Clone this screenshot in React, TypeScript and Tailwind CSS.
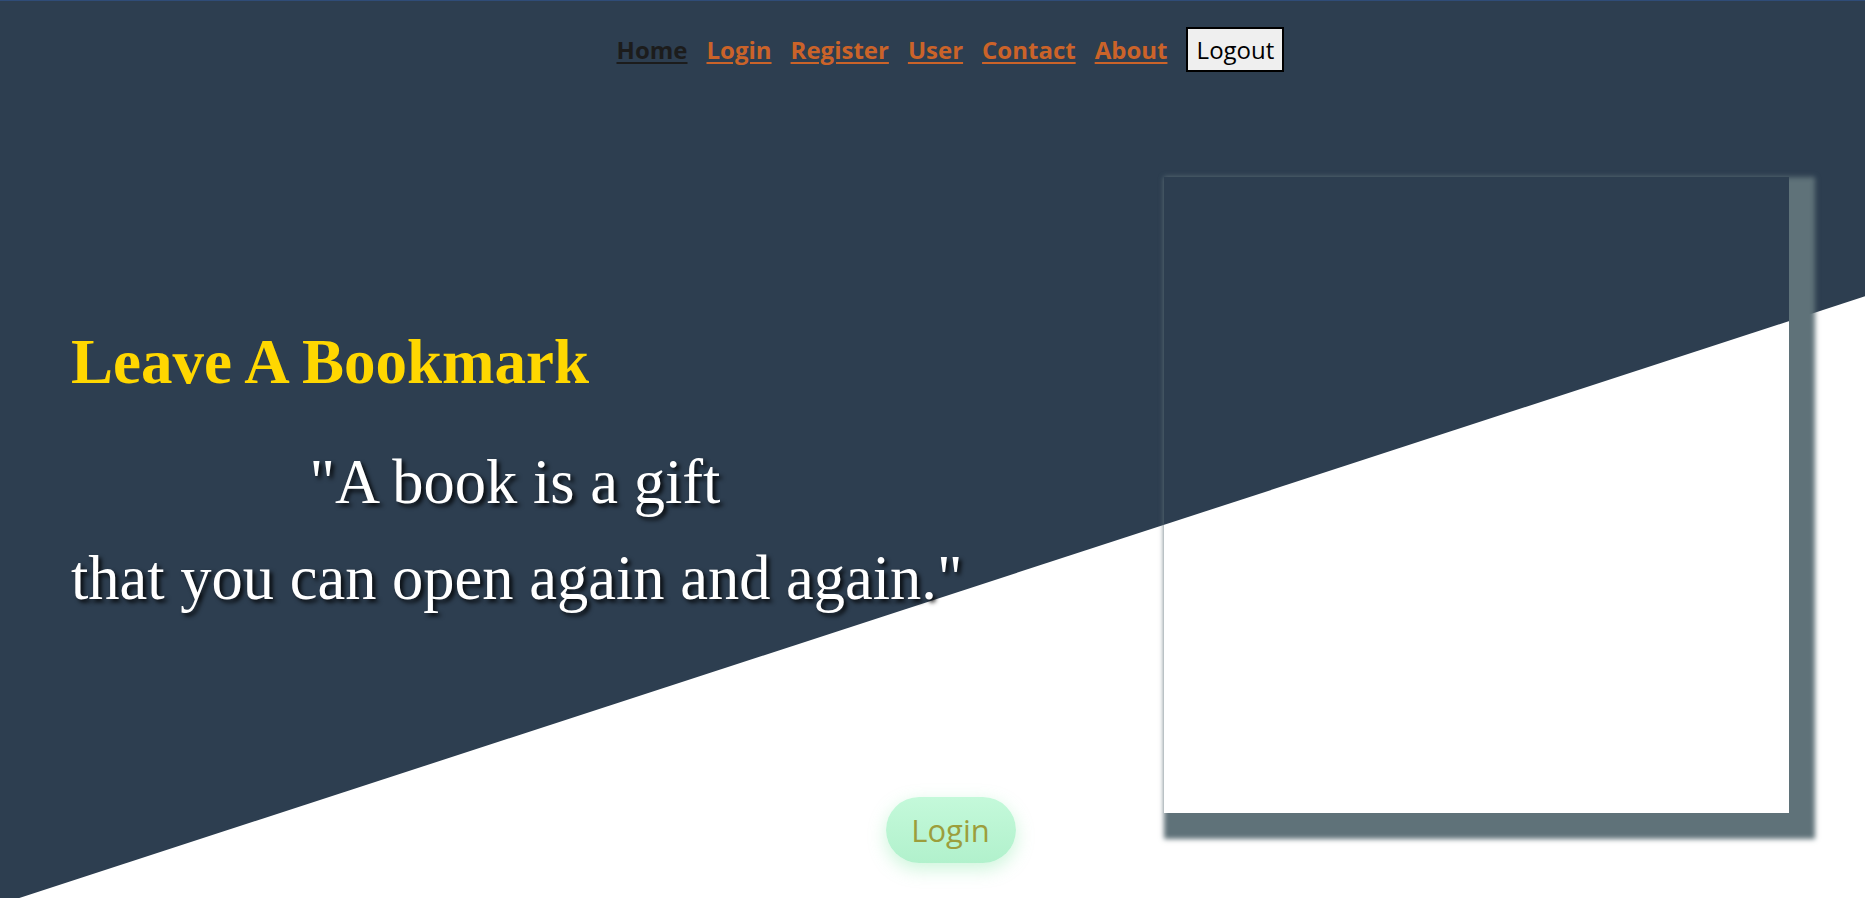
import React from "react";

const links = ["Login", "Register", "User", "Contact", "About"];

export default function App() {
  return (
    <div className="relative h-[898px] overflow-hidden bg-white">
      {/* slanted dark backdrop */}
      <div className="absolute inset-0 bg-[#2d3e50] [clip-path:polygon(0_0,100%_0,100%_33%,0_100.7%)]" />

      <div className="relative border-t border-[#2f4c78]">
        {/* Nav */}
        <nav
          className="flex items-center justify-center gap-[19px] pt-[26px] pl-[36px] text-[24px] font-bold"
          style={{ fontFamily: '"Open Sans", "Noto Sans", sans-serif' }}
        >
          <a href="#" className="text-[#1c1c1c] underline decoration-2 underline-offset-[3px]">
            Home
          </a>
          {links.map((l) => (
            <a
              key={l}
              href="#"
              className="text-[#cb6329] underline decoration-2 underline-offset-[3px]"
            >
              {l}
            </a>
          ))}
          <button className="flex h-[45px] w-[98px] items-center justify-center border-2 border-black bg-[#efefef] text-[24px] font-normal text-black">
            Logout
          </button>
        </nav>

        {/* Hero */}
        <div className="flex items-start pl-[71px]">
          <div className="flex-1" style={{ fontFamily: '"Liberation Serif", "Times New Roman", serif' }}>
            <h1 className="mt-[256px] text-[63px] font-bold leading-[69px] text-[#ffd700]">
              Leave A Bookmark
            </h1>
            <p className="mt-[37px] w-[888px] whitespace-nowrap text-center text-[62.5px] leading-[96px] text-white [text-shadow:3px_3px_4px_rgba(0,0,0,0.85)]">
              "A book is a gift
              <br />
              that you can open again and again."
            </p>
          </div>
          <div className="mt-[105px] mr-[76px] h-[636px] w-[625px] shrink-0 shadow-[13px_13px_5px_13px_#5f7279]" />
        </div>

        <div className="-mt-[16px] flex justify-center pl-[36px]">
          <button
            className="flex h-[66px] w-[130px] items-center justify-center rounded-full bg-gradient-to-b from-[#c4f9da] to-[#b1f1cc] text-[31px] text-[#9c9e3c] shadow-[0_6px_18px_rgba(110,225,150,0.35)]"
            style={{ fontFamily: '"Open Sans", "Noto Sans", sans-serif' }}
          >
            Login
          </button>
        </div>
      </div>
    </div>
  );
}
